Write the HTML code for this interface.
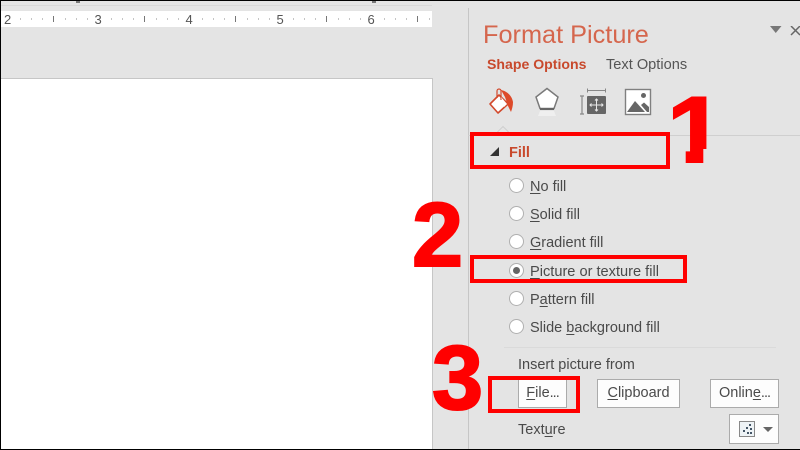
<!DOCTYPE html>
<html><head><meta charset="utf-8">
<style>
html,body{margin:0;padding:0;width:800px;height:450px;overflow:hidden;background:#e4e4e4}
#r{position:relative;width:800px;height:450px;overflow:hidden;background:#e4e4e4;font-family:"Liberation Sans",sans-serif;color:#444}
#r div{position:absolute;white-space:nowrap}
#s{position:absolute;left:0;top:0;width:800px;height:450px;filter:blur(.35px)}
.t{font-size:14.5px;line-height:18px;color:#4a4a4a}
.box{border:4px solid #f00;box-sizing:border-box}
.big{font-family:"Liberation Sans",sans-serif;font-weight:bold;color:#f00;line-height:1;-webkit-text-stroke:2px #f00}
.rad{width:13px;height:13px;border-radius:50%;background:#fff;border:1px solid #b0b0b0;box-sizing:content-box}
.btn{background:#fdfdfd;border:1px solid #ababab;box-sizing:border-box;text-align:center;font-size:14.5px;color:#4a4a4a;line-height:27px}
.n{font-size:13px;color:#555;line-height:16px;top:12px}
u{text-underline-offset:2px}
.d{letter-spacing:-1px}
</style></head><body><div id="r"><div id="s">
<div style="left:1px;top:5px;width:431px;height:1px;background:#d8d8d8"></div>

<div style="left:1px;top:11px;width:431px;height:16px;background:#fff"></div>
<div class="n" style="left:4px">2</div><div class="n" style="left:94.500px">3</div><div class="n" style="left:185.500px">4</div><div class="n" style="left:276.500px">5</div><div class="n" style="left:367.500px">6</div>
<svg style="position:absolute;left:0;top:11px" width="432" height="16">
<g fill="#777"><rect x="53" y="5" width="1" height="6"/><rect x="144" y="5" width="1" height="6"/><rect x="235" y="5" width="1" height="6"/><rect x="326" y="5" width="1" height="6"/><rect x="417" y="5" width="1" height="6"/></g>
<g fill="#c4c4c4"><rect x="20" y="7" width="1" height="2"/><rect x="31" y="7" width="1" height="2"/><rect x="42" y="7" width="1" height="2"/><rect x="65" y="7" width="1" height="2"/><rect x="76" y="7" width="1" height="2"/><rect x="87" y="7" width="1" height="2"/><rect x="111" y="7" width="1" height="2"/><rect x="122" y="7" width="1" height="2"/><rect x="133" y="7" width="1" height="2"/><rect x="156" y="7" width="1" height="2"/><rect x="167" y="7" width="1" height="2"/><rect x="178" y="7" width="1" height="2"/><rect x="202" y="7" width="1" height="2"/><rect x="213" y="7" width="1" height="2"/><rect x="224" y="7" width="1" height="2"/><rect x="247" y="7" width="1" height="2"/><rect x="258" y="7" width="1" height="2"/><rect x="269" y="7" width="1" height="2"/><rect x="293" y="7" width="1" height="2"/><rect x="304" y="7" width="1" height="2"/><rect x="315" y="7" width="1" height="2"/><rect x="338" y="7" width="1" height="2"/><rect x="349" y="7" width="1" height="2"/><rect x="360" y="7" width="1" height="2"/><rect x="384" y="7" width="1" height="2"/><rect x="395" y="7" width="1" height="2"/><rect x="406" y="7" width="1" height="2"/><rect x="429" y="7" width="1" height="2"/></g>
</svg>
<div style="left:76px;top:1px;width:4px;height:2px;background:#777"></div>
<div style="left:372px;top:1px;width:4px;height:2px;background:#777"></div>

<div style="left:1px;top:78px;width:431px;height:371px;background:#fff;border-top:1px solid #c6c6c6;border-right:1px solid #c6c6c6"></div>
<div style="left:468px;top:8px;width:1px;height:441px;background:#c6c6c6"></div>

<div style="left:483px;top:20px;font-size:25.300px;line-height:30px;color:#d5664d">Format Picture</div>
<svg style="position:absolute;left:770px;top:26px" width="30" height="12"><path d="M0 0H11.500L5.750 7Z" fill="#777"/><path d="M21 0L30 9M30 0L21 9" stroke="#666" stroke-width="1.500"/></svg>
<div style="left:487px;top:55px;font-size:14.100px;line-height:18px;font-weight:bold;color:#c8492c">Shape Options</div>
<div style="left:606px;top:56px;font-size:14.600px;line-height:18px;color:#555">Text Options</div>

<svg style="position:absolute;left:480px;top:80px" width="180" height="50">
<path d="M10 24L19 15L28 24L18 33Z" fill="#fff" stroke="#d2492c" stroke-width="1.600" stroke-linejoin="round"/>
<path d="M17 18V11a2 2 0 0 1 4 0V20" fill="none" stroke="#d2492c" stroke-width="1.200"/>
<path d="M21 10C27 11 32 16 33 22C33 26 32 29 31 32L28 26L25 17Z" fill="#dd4a2a"/>
<path d="M21 17L27 24L24 27Z" fill="#fff"/>
<path d="M67 8.500L78 17L74 28.500H60L56 17Z" fill="#fff" stroke="#7a7a7a" stroke-width="1.500"/>
<rect x="60" y="28" width="14" height="2" fill="#666"/>
<path d="M60 31H74L76 36H58Z" fill="#efefef"/>
<path d="M107.500 8.500V12.500M125.500 8.500V12.500M107.500 10.500H125.500" stroke="#888" stroke-width="1" fill="none"/>
<rect x="107" y="16" width="19" height="18" fill="#666" rx="1"/>
<path d="M116.500 19V31M110 25H123M115 20.500L116.500 19L118 20.500M115 29.500L116.500 31L118 29.500M111.500 23.500L110 25L111.500 26.500M121.500 23.500L123 25L121.500 26.500" stroke="#e8e8e8" stroke-width="1" fill="none"/>
<path d="M100 16H104M102 16V34M100 34H104" stroke="#888" stroke-width="1.200" fill="none"/>
<rect x="145.500" y="9.500" width="25" height="25" fill="#fff" stroke="#808080" stroke-width="1.400"/>
<path d="M147 32L155 21L165 32Z" fill="#666"/><path d="M161 25L164 22.500L169 27V32H167Z" fill="#666"/>
<circle cx="163.500" cy="15.500" r="2.500" fill="#666"/>
</svg>
<svg style="position:absolute;left:468px;top:120px" width="332" height="20"><path d="M0 15.500H26L35 6.500L44 15.500H332" fill="none" stroke="#cfcfcf"/></svg>

<svg style="position:absolute;left:489px;top:146px" width="12" height="12"><path d="M1 10H10V1Z" fill="#333"/></svg>
<div style="left:509px;top:144px;font-size:14.500px;line-height:18px;font-weight:bold;color:#c8492c">Fill</div>

<div class="rad" style="left:509px;top:178px"></div><div class="t" style="left:530px;top:178px"><u>N</u>o fill</div>
<div class="rad" style="left:509px;top:206px"></div><div class="t" style="left:530px;top:206px"><u>S</u>olid fill</div>
<div class="rad" style="left:509px;top:234px"></div><div class="t" style="left:530px;top:234px"><u>G</u>radient fill</div>
<div class="rad" style="left:509px;top:263px"></div><div style="left:513px;top:267px;width:7px;height:7px;border-radius:50%;background:#666"></div><div class="t" style="left:530px;top:263px;font-size:14.600px"><u>P</u>icture or texture fill</div>
<div class="rad" style="left:509px;top:291px"></div><div class="t" style="left:530px;top:291px">P<u>a</u>ttern fill</div>
<div class="rad" style="left:509px;top:319px"></div><div class="t" style="left:530px;top:319px">Slide <u>b</u>ackground fill</div>

<div style="left:504px;top:347px;width:272px;height:1px;background:#dadada"></div>
<div class="t" style="left:518px;top:356px">Insert picture from</div>
<div class="btn" style="left:518px;top:379px;width:49px;height:29px"><u>F</u>ile<span class="d">...</span></div>
<div class="btn" style="left:597px;top:379px;width:83px;height:29px"><u>C</u>lipboard</div>
<div class="btn" style="left:710px;top:379px;width:69px;height:29px">Onlin<u>e</u><span class="d">...</span></div>
<div class="t" style="left:518px;top:421px">Text<u>u</u>re</div>
<div class="btn" style="left:729px;top:414px;width:50px;height:30px"></div>
<svg style="position:absolute;left:738px;top:419px" width="40" height="20">
<rect x="1.500" y="2.500" width="15" height="15" fill="#eef3f6" stroke="#888"/>
<g fill="#456"><rect x="11" y="5" width="2" height="2"/><rect x="8" y="8" width="2" height="2"/><rect x="12" y="9" width="2" height="2"/><rect x="5" y="11" width="2" height="2"/><rect x="9" y="13" width="2" height="2"/><rect x="12" y="13" width="2" height="2"/></g>
<path d="M25 8H35L30 13Z" fill="#666"/>
</svg>

<div class="box" style="left:470px;top:132px;width:200px;height:37px"></div>
<div class="box" style="left:470px;top:255px;width:217px;height:28px"></div>
<div class="box" style="left:488px;top:376px;width:92px;height:37px"></div>

<div class="big" style="left:667px;top:83px;font-size:94px;transform:scaleX(1.1);transform-origin:0 0;clip-path:polygon(0 0,100% 0,100% 66px,33px 66px,33px 100%,17px 100%,17px 66px,0 66px)">1</div>
<div class="big" style="left:412px;top:190px;font-size:91px;transform:scaleX(1.01);transform-origin:0 0">2</div>
<div class="big" style="left:432px;top:333px;font-size:91px;transform:scaleX(1.01);transform-origin:0 0">3</div>
</div>
<div style="left:0;top:0;width:800px;height:1px;background:#000"></div>
<div style="left:0;top:0;width:1px;height:450px;background:#000"></div>
<div style="left:0;top:449px;width:800px;height:1px;background:#000"></div>
</div></body></html>
